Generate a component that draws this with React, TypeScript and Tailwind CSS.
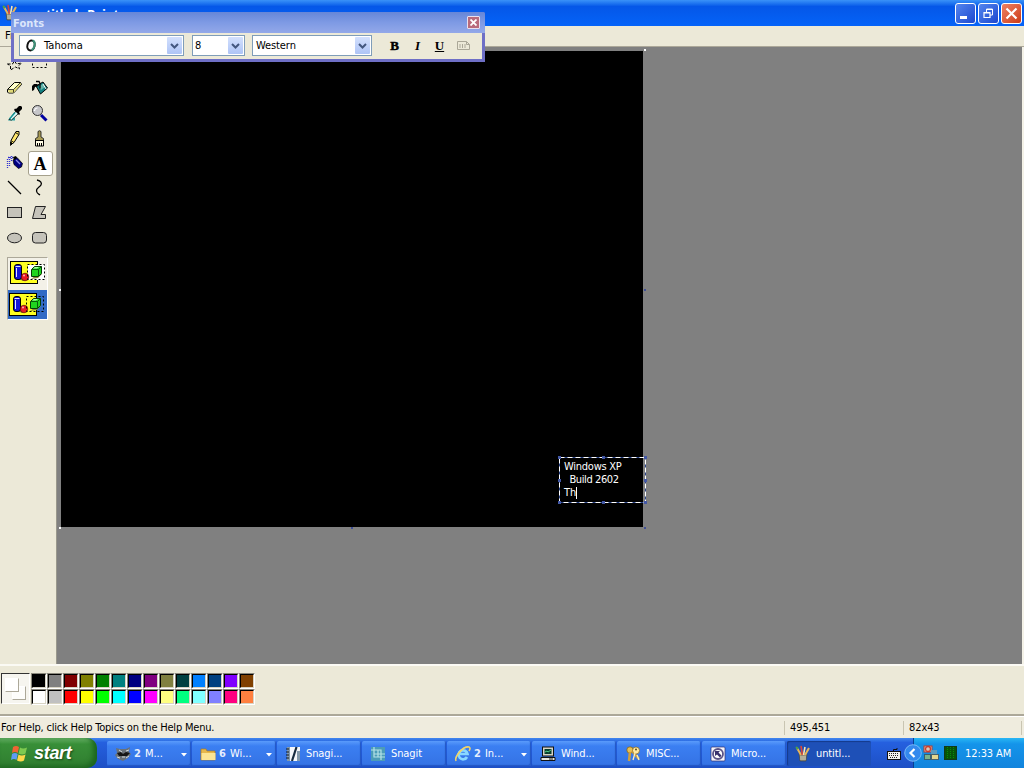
import type { ReactNode } from 'react';

const topColors = [
  '#000000', '#808080', '#800000', '#808000', '#008000', '#008080', '#000080',
  '#800080', '#808040', '#004040', '#0080ff', '#004080', '#8000ff', '#804000',
];
const bottomColors = [
  '#ffffff', '#c0c0c0', '#ff0000', '#ffff00', '#00ff00', '#00ffff', '#0000ff',
  '#ff00ff', '#ffff80', '#00ff80', '#80ffff', '#8080ff', '#ff0080', '#ff8040',
];

function Icon({ children, size = 17 }: { children: ReactNode; size?: number }) {
  return (
    <svg width={size} height={size} viewBox={`0 0 ${size} ${size}`} className="block shrink-0 overflow-visible">
      {children}
    </svg>
  );
}

function PaintIcon() {
  return (
    <Icon size={16}>
      <path d="M4 8h8l-1 7H5z" fill="#8d8a78" stroke="#4a4433" strokeWidth=".6" />
      <path d="M2 2l4 7M14 2l-4 7" stroke="#e8b458" strokeWidth="2" />
      <path d="M6 0l1.500 9" stroke="#e04434" strokeWidth="1.600" />
      <path d="M10 1L8.500 9" stroke="#f4e6b8" strokeWidth="1.600" />
      <path d="M6 10v4M8 10v4M10 10v4" stroke="#d9d4bd" strokeWidth="1" />
      <path d="M1 1l2 2" stroke="#49a04a" strokeWidth="2" />
    </Icon>
  );
}

const tools: { name: string; icon: ReactNode }[] = [
  {
    name: 'free-select',
    icon: <path d="M1.500 9l5 0 2-3 2 3 5-1-3 3 1 3-4-2-5 3 0-4z" fill="none" stroke="#000" strokeDasharray="3 1.500" />,
  },
  { name: 'select', icon: <rect x="1.500" y="2.500" width="14" height="10" fill="none" stroke="#000" strokeDasharray="2 2" /> },
  {
    name: 'eraser',
    icon: (
      <>
        <path d="M1.500 9.500l7-7h6l1 2-7 7.500-1 1h-5l-1-1z" fill="#ffffc8" stroke="#000" />
        <path d="M2 10h5.500l7-7 .5 1.500-7 8H3z" fill="#e0d878" />
        <path d="M1.500 9.500h6l7-7M7.500 9.500v3" fill="none" stroke="#000" strokeWidth=".7" />
      </>
    ),
  },
  {
    name: 'fill',
    icon: (
      <>
        <path d="M5 6l7-4 4.500 6-7 6z" fill="#138080" stroke="#000" />
        <path d="M8 6l4-2 2 3-4 3z" fill="#66b5aa" />
        <path d="M12 4l3 5" stroke="#fff" />
        <path d="M5 1.500h3l1 2v5" fill="none" stroke="#000" strokeWidth="1.300" />
        <path d="M6 4H3L1 6v5l2-1 1-3 4-1z" fill="#000" />
      </>
    ),
  },
  {
    name: 'pick',
    icon: (
      <>
        <path d="M2 15.500h7v-3H4z" fill="#2ba5a5" />
        <path d="M3 14.500l7.500-9 2.500 2.500-7.500 7z" fill="#dff" stroke="#000" strokeWidth=".8" />
        <path d="M3.500 14l5.500-6.500" stroke="#1a9595" strokeWidth="1.500" />
        <path d="M8 5l5 5 1-1-1-2 3-3V2l-1-1h-2l-3 3-1-.5z" fill="#000" />
      </>
    ),
  },
  {
    name: 'zoom',
    icon: (
      <>
        <path d="M10 10l5.500 5.500" stroke="#0000a0" strokeWidth="3" />
        <circle cx="6.500" cy="5.500" r="5" fill="#c6c6c9" stroke="#333" />
        <path d="M3.500 6a3 3 0 013-3" fill="none" stroke="#fff" strokeWidth="1.200" />
      </>
    ),
  },
  {
    name: 'pencil',
    icon: (
      <>
        <path d="M5 14.500v-4l5-9h3v3l-5 8z" fill="#ffe66c" stroke="#000" />
        <path d="M9.500 2.500l3 2" stroke="#000" />
        <path d="M5 10.500l3 2M4.500 12l2 1.500-2 2z" fill="#000" stroke="#000" strokeWidth=".8" />
      </>
    ),
  },
  {
    name: 'brush',
    icon: (
      <>
        <path d="M7 7V1.500q1.500-1.500 3 0V7l2.500 1.500v2h-8v-2z" fill="#a79a54" stroke="#222" strokeWidth=".9" />
        <path d="M4.500 10.500h8v5.500h-8z" fill="#fffbe4" stroke="#000" />
        <path d="M6.500 13v3M8.500 13v3M10.500 13v3M4 10.500h9" stroke="#000" />
      </>
    ),
  },
  {
    name: 'airbrush',
    icon: (
      <>
        <path d="M1.500 4v9M3.500 2v9M5.500 1v6" stroke="#3434d0" strokeWidth="1.300" strokeDasharray="1 1" />
        <path d="M2 2.500h6" stroke="#3434d0" strokeWidth="1.300" strokeDasharray="1 1" />
        <path d="M7 5l4-2.500 5.500 6-1 3.500-3 1.500-4.500-4z" fill="#000080" stroke="#000" strokeWidth=".7" />
        <path d="M7 2l3-1 1 2-3 2z" fill="#000" />
        <path d="M10 5l4 4" stroke="#8888e8" strokeWidth="1.200" />
      </>
    ),
  },
  { name: 'text', icon: null },
  { name: 'line', icon: <path d="M2 1l13 13" stroke="#000" strokeWidth="1.300" /> },
  {
    name: 'curve',
    icon: <path d="M6 0c4 1 5 3 4 5S5 8 5.500 11s2 3 3.500 4" fill="none" stroke="#000" strokeWidth="1.300" />,
  },
  { name: 'rect', icon: <rect x="1.500" y="2.500" width="14" height="10" fill="#c5c3ba" stroke="#222" /> },
  { name: 'polygon', icon: <path d="M4.500 1.500h10l-4.500 8h4.500v4h-13z" fill="#c5c3ba" stroke="#222" /> },
  { name: 'ellipse', icon: <ellipse cx="8.500" cy="8" rx="7" ry="4.800" fill="#c5c3ba" stroke="#222" /> },
  { name: 'round-rect', icon: <rect x="1.500" y="2.500" width="14" height="10.500" rx="3" fill="#c5c3ba" stroke="#222" /> },
];

function ShapesIcon({ opaque }: { opaque: boolean }) {
  return (
    <svg width="36" height="24" viewBox="0 0 36 24" className="block">
      <rect x=".5" y=".5" width="27" height="22" fill="#ffff20" stroke="#000" />
      {opaque && <rect x="18" y="4" width="17" height="15" fill="#fff" />}
      <path d="M7 17l6 3 4-2-3-5zM21 18l7-1 4-4-3-1z" fill="#8a8838" />
      <rect x="4.500" y="3.500" width="7" height="15" rx="2.500" fill="#1414d8" stroke="#000" />
      <path d="M5.500 5.500h5M6.500 7v9" stroke="#dfe4ff" />
      <circle cx="15" cy="16" r="3.800" fill="#e81c24" stroke="#400" strokeWidth=".6" />
      <circle cx="14" cy="14.500" r="1" fill="#ffb0b0" />
      <path d="M21.500 8.500l3-3h7v7l-3 3h-7z" fill="#1fd51f" stroke="#063d06" />
      <path d="M22 8.500h6.500l3-3M28.500 8.500v7" fill="none" stroke="#075f07" />
      <path d="M23 7.500h4l2-1.500h-4z" fill="#b0ffb0" />
      <rect x="17.500" y="3.500" width="17" height="15" fill="none" stroke="#000" strokeDasharray="2 2" />
    </svg>
  );
}

function Combo({ className, children }: { className: string; children: ReactNode }) {
  return (
    <div className={`flex h-[21px] items-center border border-[#7f9db9] bg-white pr-px ${className}`}>
      <div className="flex flex-1 items-center">{children}</div>
      <div className="flex h-[17px] w-[15px] items-center justify-center rounded-[1px] bg-linear-to-b from-[#d3e0fd] to-[#aec4f6]">
        <svg width="9" height="6" viewBox="0 0 9 6">
          <path d="M1 1l3.500 3.500L8 1" fill="none" stroke="#43577f" strokeWidth="2" />
        </svg>
      </div>
    </div>
  );
}

function FontsBar() {
  return (
    <div className="absolute top-[12px] left-[11px] flex h-[50px] w-[474px] flex-col rounded-t-[2px] border-x-[3px] border-b-[3px] border-[#6e6fc6] bg-[#ece9d8]">
      <div className="-mx-[3px] flex h-[21px] shrink-0 items-center justify-between rounded-t-[2px] bg-linear-to-b from-[#6686d8] via-[#7e9ae4] to-[#93a8e9] pr-[5px] pl-[2px]">
        <span className="mt-[2px] text-[11px] font-bold tracking-[0.1px] text-[#dce6fb]">Fonts</span>
        <div className="flex h-[13px] w-[13px] items-center justify-center rounded-[1px] border border-[#e9e0ee] bg-[#b96b7c]">
          <svg width="7" height="7" viewBox="0 0 7 7">
            <path d="M.5.500l6 6M6.500.500l-6 6" stroke="#fff" strokeWidth="1.800" />
          </svg>
        </div>
      </div>
      <div className="flex items-start pt-[2px] pl-[5px]">
        <Combo className="w-[165px]">
          <svg width="12" height="13" viewBox="0 0 12 13" className="ml-[5px]">
            <ellipse cx="6" cy="6.500" rx="3.600" ry="5" transform="rotate(14 6 6.500)" fill="none" stroke="#111" strokeWidth="2" />
            <path d="M7.500 1.500q3 1 2 5-1 4-3 4.500" fill="none" stroke="#3c9278" strokeWidth="2" />
          </svg>
          <span className="ml-[7px] tracking-[0.1px]">Tahoma</span>
        </Combo>
        <Combo className="ml-[8px] w-[53px]">
          <span className="ml-[2px]">8</span>
        </Combo>
        <Combo className="ml-[7px] w-[120px]">
          <span className="ml-[3px] tracking-[-0.1px]">Western</span>
        </Combo>
        <div className="ml-[12px] flex h-[21px] items-center font-['Liberation_Serif',serif] text-[13px] font-bold text-black">
          <span className="w-[21px] text-center font-black [-webkit-text-stroke:0.5px_black]">B</span>
          <span className="ml-[1px] w-[23px] text-center italic">I</span>
          <span className="w-[21px] text-center underline decoration-1 underline-offset-1">U</span>
          <svg width="14" height="11" viewBox="0 0 14 11" className="ml-[7px]">
            <path d="M.5 1.500h9l3 3v5H.5zM3 4v4M5.500 4v4M8 4v4M9.500 1.500v3h3" fill="none" stroke="#aaa797" />
          </svg>
        </div>
      </div>
    </div>
  );
}

function TitleBar() {
  return (
    <div className="flex h-[26px] shrink-0 items-center justify-between bg-linear-to-b from-[#3a92f8] via-[#0557e8] via-25% to-[#0563f8] pr-[2px] pl-[2px]">
      <div className="flex items-center">
        <PaintIcon />
        <span className="mt-[2px] ml-[12px] font-['Open_Sans',sans-serif] text-[13px] leading-[14px] font-bold tracking-[-0.55px] text-white [font-stretch:normal]">
          untitled - Paint
        </span>
      </div>
      <div className="flex gap-[2px]">
        <div className="h-[21px] w-[21px] rounded-[3px] border border-white bg-linear-to-br from-[#5585ee] to-[#1d46cf]">
          <div className="mt-[12px] ml-[4px] h-[3px] w-[7px] bg-white" />
        </div>
        <div className="flex h-[21px] w-[21px] items-center justify-center rounded-[3px] border border-white bg-linear-to-br from-[#5585ee] to-[#1d46cf]">
          <svg width="11" height="11" viewBox="0 0 11 11">
            <path d="M3.500 4V1h6v6H7M3 1.500h7" fill="none" stroke="#fff" />
            <path d="M1 4.500h6v5H1zM1 5h6" fill="none" stroke="#fff" strokeWidth="1.200" />
          </svg>
        </div>
        <div className="flex h-[21px] w-[21px] items-center justify-center rounded-[3px] border border-white bg-linear-to-br from-[#ee8062] to-[#cc3a12]">
          <svg width="13" height="13" viewBox="0 0 13 13">
            <path d="M1.500 1.500l10 10M11.500 1.500l-10 10" stroke="#fff" strokeWidth="2.200" />
          </svg>
        </div>
      </div>
    </div>
  );
}

function Toolbox() {
  return (
    <div className="h-full w-[57px] shrink-0 border-r border-[#9a988c] pt-[4px] pl-[2px]">
      <div className="grid w-[50px] grid-cols-2">
        {tools.map((tool) =>
          tool.name === 'text' ? (
            <div
              key={tool.name}
              className="ml-px flex h-[25px] w-[25px] items-center justify-center rounded-[3px] border border-[#a5a08c] bg-white pr-px font-['Liberation_Serif',serif] text-[18px] font-bold text-black"
            >
              A
            </div>
          ) : (
            <div key={tool.name} className="flex h-[25px] items-center justify-center">
              <Icon>{tool.icon}</Icon>
            </div>
          ),
        )}
      </div>
      <div className="mt-[6px] ml-[5px] w-[41px] border border-t-[#aca899] border-r-white border-b-white border-l-[#aca899] bg-[#f3f1e8]">
        <div className="flex h-[32px] items-start pt-[3px] pl-[2px]">
          <ShapesIcon opaque />
        </div>
        <div className="flex h-[29px] items-center bg-[#316ac5] pl-[1px]">
          <ShapesIcon opaque={false} />
        </div>
      </div>
    </div>
  );
}

const canvasHandles = [
  'left-[-2px] top-[-2px] bg-white',
  'left-[583px] top-[-2px] bg-white',
  'left-[-2px] top-[238px] bg-white',
  'left-[583px] top-[238px] bg-[#3f4f96]',
  'left-[-2px] top-[476px] bg-white',
  'left-[290px] top-[476px] bg-[#3f4f96]',
  'left-[583px] top-[476px] bg-[#3f4f96]',
];

const textHandles = [
  'left-[-1px] top-[-1px]', 'left-[43px] top-[-1px]', 'left-[85px] top-[-1px]',
  'left-[-1px] top-[22px]', 'left-[85px] top-[22px]',
  'left-[-1px] top-[44px]', 'left-[43px] top-[44px]', 'left-[85px] top-[44px]',
];

function Workspace() {
  return (
    <div className="flex-1 border-r-2 border-[#f4f2e8] bg-[#808080] pt-[4px] pl-[4px]">
      <div className="relative h-[476px] w-[582px] bg-black">
        {canvasHandles.map((pos) => (
          <div key={pos} className={`absolute h-[2px] w-[2px] ${pos}`} />
        ))}
        <div className="absolute top-[406px] left-[498px] h-[46px] w-[87px]">
          <svg width="87" height="46" viewBox="0 0 87 46" className="absolute inset-0">
            <rect x=".5" y=".5" width="86" height="45" fill="none" stroke="#2b4489" />
            <rect x=".5" y=".5" width="86" height="45" fill="none" stroke="#fff" strokeDasharray="5 3" />
          </svg>
          {textHandles.map((pos) => (
            <div key={pos} className={`absolute h-[3px] w-[3px] bg-[#4257a5] ${pos}`} />
          ))}
          <div className="relative pt-[3px] pl-[5px] leading-[13px] whitespace-pre text-white">
            <div className="tracking-[-0.25px]">Windows XP</div>
            <div className="tracking-[-0.4px]">{'  Build 2602'}</div>
            <div className="flex items-center">
              Th
              <div className="h-[12px] w-px bg-white" />
            </div>
          </div>
        </div>
      </div>
    </div>
  );
}

function Palette() {
  return (
    <div className="flex h-[48px] shrink-0 items-start pt-[7px] pl-px">
      <div className="relative h-[31px] w-[29px] border border-t-[#333] border-r-white border-b-white border-l-[#333] bg-[#f6f5ef]">
        <div className="absolute top-[12px] left-[10px] h-[14px] w-[14px] border border-t-white border-r-[#aca899] border-b-[#aca899] border-l-white bg-[#fdfdfb]" />
        <div className="absolute top-[4px] left-[3px] h-[14px] w-[14px] border border-t-white border-r-[#aca899] border-b-[#aca899] border-l-white bg-white" />
      </div>
      <div className="ml-px grid grid-cols-[repeat(14,16px)]">
        {[...topColors, ...bottomColors].map((color) => (
          <div key={color} className="h-[16px] border-t border-r border-b border-l border-t-[#8a887c] border-r-white border-b-white border-l-[#8a887c]">
            <div
              className="h-[14px] w-[14px] border border-t-black border-r-[#d8d4c4] border-b-[#d8d4c4] border-l-black"
              style={{ backgroundColor: color }}
            />
          </div>
        ))}
      </div>
    </div>
  );
}

const tasks: { label: string; count?: string; active?: boolean; icon: ReactNode }[] = [
  {
    label: 'M...',
    count: '2',
    icon: (
      <>
        <path d="M1 2l4 1h6l4-2-1 5 2 2-3 4-5 3-5-2-3-4 2-2z" fill="#6a7278" />
        <path d="M2 7l4-1 2 2 3-2 4 1-3 3H4z" fill="#151515" />
        <path d="M4 4l3 2M11 5l3-1M2 11l3 1M11 12l3-2M7 11h3" stroke="#d4dadd" />
      </>
    ),
  },
  {
    label: 'Wi...',
    count: '6',
    icon: (
      <>
        <path d="M1 3h5l1 2h8v9H1z" fill="#e6b84c" stroke="#a97a20" strokeWidth=".7" />
        <path d="M1.500 7h14v7h-14z" fill="#fbe594" />
      </>
    ),
  },
  {
    label: 'Snagi...',
    icon: (
      <>
        <rect x="2" y="1" width="13" height="14" fill="#f4f7fa" />
        <path d="M2 1h3v14H2zM12 5h3v10h-3z" fill="#8399ab" />
        <path d="M11.500 1L7 15" stroke="#182c40" strokeWidth="2.200" />
        <path d="M1 3h3M1 6h3M1 9h3M1 12h3" stroke="#101820" />
      </>
    ),
  },
  {
    label: 'Snagit',
    icon: (
      <>
        <rect x="1" y="1" width="14" height="14" fill="#4c9cb8" />
        <path d="M4 1v10h11M1 4h10v10M8 4v7M4 8h11" fill="none" stroke="#b5e2e6" strokeWidth="1.200" />
      </>
    ),
  },
  {
    label: 'In...',
    count: '2',
    icon: (
      <>
        <path d="M12 11a4.500 4.500 0 11.500-3H5" fill="none" stroke="#8ad8ff" strokeWidth="2.700" />
        <path d="M1 15C-1 11 8 0 14 1q2 1 0 4" fill="none" stroke="#f2d468" strokeWidth="1.600" />
      </>
    ),
  },
  {
    label: 'Wind...',
    icon: (
      <>
        <rect x="2.500" y="1" width="11" height="9" fill="#d6d3c6" stroke="#111" />
        <rect x="4.500" y="3" width="7" height="5" fill="#063c2c" />
        <path d="M5 6l2-1 1 1 3-2" fill="none" stroke="#52cb87" />
        <path d="M1 11.500h14v3H1z" fill="#e7e4da" stroke="#111" />
        <path d="M9 13h4" stroke="#222" />
      </>
    ),
  },
  {
    label: 'MISC...',
    icon: (
      <>
        <circle cx="5" cy="4" r="3.200" fill="#e8bf53" stroke="#7a5a17" strokeWidth=".7" />
        <path d="M5 6l-1 9M7 5l7 8" stroke="#d0a03e" strokeWidth="2.500" />
        <circle cx="11" cy="4.500" r="3.500" fill="#ffe9a0" stroke="#8a6720" strokeWidth=".7" />
        <path d="M10 7l-2 7M12 9l2 5" stroke="#fff0b6" strokeWidth="1.300" />
        <circle cx="11" cy="3.500" r="1" fill="#5a4a20" />
      </>
    ),
  },
  {
    label: 'Micro...',
    icon: (
      <>
        <rect x="1" y="1" width="14" height="14" rx="1" fill="#f6f5fb" stroke="#2c2d70" strokeWidth=".7" />
        <circle cx="8" cy="8" r="5" fill="#fff" stroke="#5b5487" strokeWidth="1.800" />
        <path d="M5 5h5L8.500 6.500l3 3-1.500 2-3-3L5 10z" fill="#39316d" />
      </>
    ),
  },
  { label: 'untitl...', active: true, icon: null },
];

function Taskbar() {
  return (
    <div className="flex h-[30px] shrink-0 bg-linear-to-b from-[#4186ee] via-[#2560df] via-15% to-[#1d4fc5] text-white">
      <div className="flex h-full w-[97px] items-center rounded-r-[10px] bg-linear-to-b from-[#65b064] via-[#388f38] via-20% to-[#2f7d2f] pl-[11px] shadow-[inset_-4px_-2px_5px_#1c661f]">
        <svg width="17" height="17" viewBox="0 0 17 17">
          <path d="M2 2q3-2 6 0L6.700 8Q4 6 1 8z" fill="#f06434" />
          <path d="M9 2.500q3 2 7 0L14.500 8.500q-3 2-7 0z" fill="#7fca50" />
          <path d="M1 9q3-2 5.700 0L5.500 15Q3 13 0 15z" fill="#5f9cf4" />
          <path d="M7.500 9.500q3 2 7 0L13 15.500q-3 2-7 0z" fill="#ffd84a" />
        </svg>
        <span className="ml-[6px] font-['Liberation_Sans',sans-serif] text-[18px] font-bold tracking-[-0.3px] text-white italic [font-stretch:normal] [text-shadow:1px_1px_2px_#174817]">
          start
        </span>
      </div>
      <div className="flex flex-1 gap-px pt-[3px] pl-[10px]">
        {tasks.map((task, idx) => (
          <div
            key={idx}
            className={`flex h-[25px] w-[84px] shrink-0 items-center rounded-[2px] pl-[8px] ${
              task.active
                ? 'bg-[#1e50b7] shadow-[inset_1px_1px_1px_#153a8b]'
                : 'bg-linear-to-b from-[#5a9bfb] via-[#3b7ff2] via-20% to-[#3472e4] shadow-[inset_-1px_-1px_1px_#2356c2]'
            }`}
          >
            {task.active ? <PaintIcon /> : <Icon size={16}>{task.icon}</Icon>}
            {task.count && <span className="ml-[3px] text-[11px] font-bold text-[#e6eefd]">{task.count}</span>}
            <span className={task.count ? 'ml-[4px]' : 'ml-[5px] tracking-[-0.1px]'}>{task.label}</span>
            {task.count && (
              <svg width="6" height="4" viewBox="0 0 6 4" className="mt-[2px] mr-[4px] ml-auto">
                <path d="M0 0h6L3 3.500z" fill="#fff" />
              </svg>
            )}
          </div>
        ))}
        <svg width="14" height="12" viewBox="0 0 14 12" className="mt-[7px] ml-[15px]">
          <path d="M6.500 4V1.500H10V0" fill="none" stroke="#111" />
          <rect x=".5" y="3.500" width="13" height="8" fill="#f2f2ee" stroke="#111" />
          <path d="M2 5.500h10M2 7.500h10M3 9.500h8" stroke="#222" strokeDasharray="1 1" />
        </svg>
      </div>
      <div className="flex w-[111px] items-center border-l border-[#0a3f91] bg-linear-to-b from-[#28b6f4] via-[#1494ea] via-20% to-[#1284dd]">
        <svg width="18" height="18" viewBox="0 0 18 18" className="-ml-[10px] shrink-0">
          <circle cx="9" cy="9" r="8.300" fill="#3489ed" stroke="#8bc8fb" strokeWidth=".8" />
          <path d="M10.500 5L6.500 9l4 4" fill="none" stroke="#fff" strokeWidth="2.200" />
        </svg>
        <svg width="16" height="16" viewBox="0 0 16 16" className="ml-px shrink-0">
          <rect x="1" y="1" width="8" height="6" fill="#d8c8b8" stroke="#b23c32" />
          <circle cx="5" cy="4" r="2.500" fill="none" stroke="#d03b2b" strokeWidth="1.300" />
          <rect x="8" y="5" width="6" height="4" fill="#5b9cc0" />
          <rect x="1.500" y="9.500" width="6" height="5" fill="#7bb38a" stroke="#375d70" />
          <rect x="8.500" y="9.500" width="7" height="5" fill="#e5d68d" stroke="#47616c" />
        </svg>
        <svg width="13" height="14" viewBox="0 0 13 14" className="ml-[5px] shrink-0">
          <rect x=".5" y=".5" width="12" height="13" fill="#075407" stroke="#113917" />
          <path d="M3.500 1v12M6.500 1v12M9.500 1v12" stroke="#0a8a0a" strokeDasharray="1 1" />
        </svg>
        <span className="mt-px ml-[8px] tracking-[-0.1px] whitespace-nowrap">12:33 AM</span>
      </div>
    </div>
  );
}

export default function App() {
  return (
    <div className="relative flex h-[768px] w-[1024px] flex-col overflow-hidden bg-[#ece9d8] font-['DejaVu_Sans_Condensed','DejaVu_Sans',sans-serif] text-[11px] leading-[14px] text-black [font-stretch:condensed]">
      <TitleBar />
      <div className="flex h-[21px] shrink-0 items-center border-b border-[#aca899] pl-[5px]">File</div>
      <div className="flex h-[617px] shrink-0">
        <Toolbox />
        <Workspace />
      </div>
      <div className="h-[2px] shrink-0 bg-[#fbfaf4]" />
      <Palette />
      <div className="flex h-[24px] shrink-0 items-center border-t-2 border-[#aca899] bg-[#efecde] pt-[2px] shadow-[inset_0_1px_0_#fff]">
        <span className="w-[784px] pl-px tracking-[-0.2px]">For Help, click Help Topics on the Help Menu.</span>
        <span className="w-[119px] border-l border-[#c9c5b2] pl-[5px] tracking-[-0.1px]">495,451</span>
        <span className="w-[119px] border-x border-[#c9c5b2] pl-[5px] tracking-[-0.1px]">82x43</span>
      </div>
      <Taskbar />
      <FontsBar />
    </div>
  );
}
